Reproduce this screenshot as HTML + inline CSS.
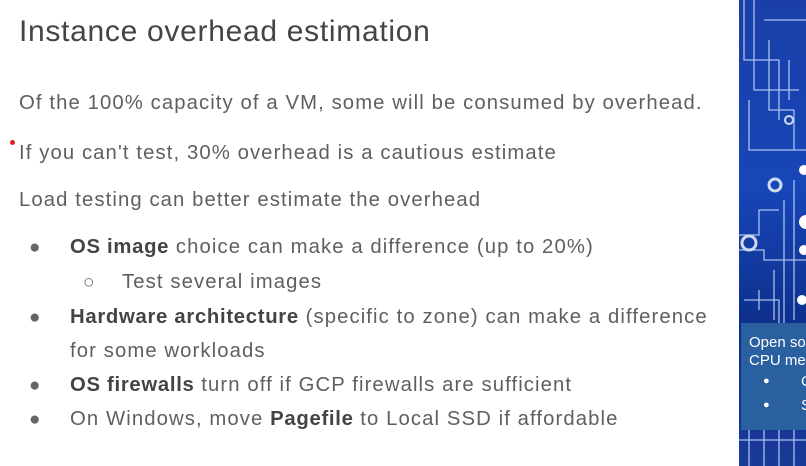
<!DOCTYPE html>
<html><head><style>
body{margin:0;width:806px;height:466px;overflow:hidden;background:#fff;font-family:"Liberation Sans",sans-serif;position:relative;color:#555}
.t{position:absolute;white-space:nowrap}
.h{font-size:30px;color:#444;left:19px;top:15px;letter-spacing:0.7px}
.p{font-size:20.3px;color:#5f5f5f;letter-spacing:1.1px}
b{color:#444;letter-spacing:0.7px}
.d{font-size:19px;color:#666}
.panel{position:absolute;left:739px;top:0;width:67px;height:466px;background:linear-gradient(180deg,#1a3fa8,#1746b8 40%,#0d2f8a 70%,#1a3a9a)}
.box{position:absolute;left:741px;top:323px;width:65px;height:107px;background:#2a5fa0;color:#fff;font-size:15px}
</style></head><body>
<div class="t h">Instance overhead estimation</div>
<div class="t p" style="left:19px;top:92px">Of the 100% capacity of a VM, some will be consumed by overhead.</div>
<div style="position:absolute;left:10px;top:140px;width:5px;height:5px;border-radius:50%;background:#d22"></div>
<div class="t p" style="left:19px;top:142px">If you can't test, 30% overhead is a cautious estimate</div>
<div class="t p" style="left:19px;top:189px">Load testing can better estimate the overhead</div>
<div class="t d" style="left:29px;top:237px">●</div>
<div class="t p" style="left:70px;top:236px"><b>OS image</b> choice can make a difference (up to 20%)</div>
<div class="t d" style="left:83px;top:272px">○</div>
<div class="t p" style="left:122px;top:271px">Test several images</div>
<div class="t d" style="left:29px;top:307px">●</div>
<div class="t p" style="left:70px;top:306px"><b>Hardware architecture</b> (specific to zone) can make a difference</div>
<div class="t p" style="left:70px;top:340px">for some workloads</div>
<div class="t d" style="left:29px;top:375px">●</div>
<div class="t p" style="left:70px;top:374px"><b>OS firewalls</b> turn off if GCP firewalls are sufficient</div>
<div class="t d" style="left:29px;top:409px">●</div>
<div class="t p" style="left:70px;top:408px">On Windows, move <b>Pagefile</b> to Local SSD if affordable</div>
<div class="panel">
<svg width="67" height="466" style="position:absolute;left:0;top:0" fill="none" stroke="#cfe0ff" stroke-width="1.3" opacity=".8">
<path d="M5 0V60H40V120M15 0V90H60M25 20H67M30 40V110H55V150M10 100V150H67M50 60V100"/>
<path d="M0 235H20V210H40M0 250H25V260H67M20 290V310M5 300H40V325M45 200V330M55 180V320M35 270V320"/>
<circle cx="36" cy="185" r="6" stroke-width="3" stroke="#fff"/><circle cx="10" cy="243" r="7" stroke-width="3" stroke="#fff"/>
<circle cx="50" cy="120" r="4" stroke="#fff" stroke-width="2"/>
<path d="M0 440H67M10 430V466M25 430V466M40 430V466M55 430V466"/>
</svg>
<div style="position:absolute;left:60px;top:215px;width:14px;height:14px;border-radius:50%;background:#fff"></div>
<div style="position:absolute;left:60px;top:165px;width:10px;height:10px;border-radius:50%;background:#fff"></div>
<div style="position:absolute;left:60px;top:245px;width:10px;height:10px;border-radius:50%;background:#fff"></div>
<div style="position:absolute;left:58px;top:295px;width:10px;height:10px;border-radius:50%;background:#fff"></div>
</div>
<div class="box">
<div class="t" style="left:8px;top:11px">Open so</div>
<div class="t" style="left:8px;top:29px">CPU me</div>
<div class="t" style="left:22px;top:52px;font-size:11px">●</div><div class="t" style="left:60px;top:50px">C</div>
<div class="t" style="left:22px;top:76px;font-size:11px">●</div><div class="t" style="left:60px;top:74px">S</div>
</div>
</body></html>
